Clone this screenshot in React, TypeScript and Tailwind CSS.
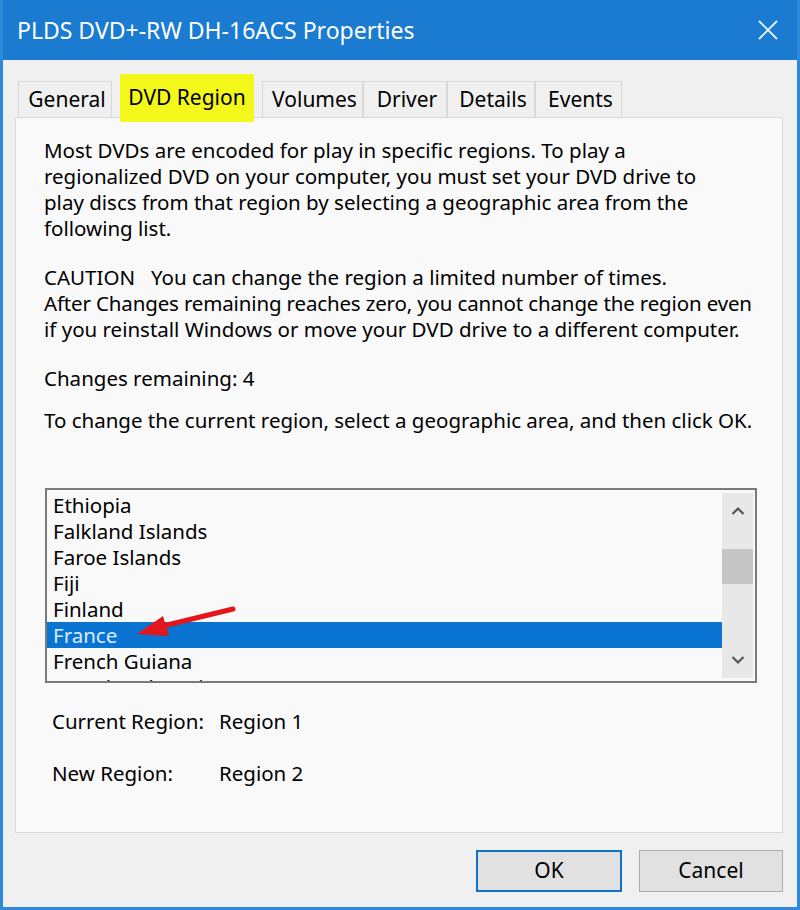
const TABS = [
  { label: 'General', w: 'w-[94px]' },
  { label: 'DVD Region', w: 'w-[150px]' },
  { label: 'Volumes', w: 'w-[101px]' },
  { label: 'Driver', w: 'w-[84px]' },
  { label: 'Details', w: 'w-[88px]' },
  { label: 'Events', w: 'w-[87px]' },
];

const COUNTRIES = [
  'Ethiopia',
  'Falkland Islands',
  'Faroe Islands',
  'Fiji',
  'Finland',
  'France',
  'French Guiana',
  'French Polynesia',
];

const font = "font-['Noto_Sans','Liberation_Sans',sans-serif]";

function Tab({ label, w }: { label: string; w: string }) {
  if (label === 'DVD Region') {
    return (
      <div className={`relative z-10 -mb-[5px] flex h-[48px] ${w} justify-center`}>
        <div className="flex w-[134px] items-center justify-center rounded-[2px] bg-[#f4f71a] text-[21px] text-black">
          {label}
        </div>
      </div>
    );
  }
  return (
    <div className={`flex h-[36px] ${w} items-center justify-center border border-b-0 border-[#d9d9d9] bg-[#f0f0f0] pl-[4px] text-[21px] text-black`}>
      {label}
    </div>
  );
}

function ScrollBar() {
  return (
    <div className="my-[3px] mr-[2px] flex w-[31px] flex-col bg-[#e8e8e8]">
      <div className="flex h-[36px] items-center justify-center">
        <svg width="14" height="10" viewBox="0 0 14 10">
          <path d="M1.5 8 L7 2.5 L12.5 8" fill="none" stroke="#555" strokeWidth="2.2" />
        </svg>
      </div>
      <div className="mt-[20px] h-[35px] bg-[#c6c6c6]" />
      <div className="flex-1" />
      <div className="flex h-[36px] items-center justify-center">
        <svg width="14" height="10" viewBox="0 0 14 10">
          <path d="M1.5 2 L7 7.5 L12.5 2" fill="none" stroke="#555" strokeWidth="2.2" />
        </svg>
      </div>
    </div>
  );
}

export default function App() {
  return (
    <div className={`relative flex h-[910px] w-[800px] flex-col border-x-[3px] border-b-[3px] border-[#2e8ad8] bg-[#f0f0f0] ${font}`}>
      {/* Title bar */}
      <div className="flex h-[60px] shrink-0 items-center justify-between bg-[#1a7bd0] pl-[14px] pr-[19px] text-white">
        <span className="text-[23px]">PLDS DVD+-RW DH-16ACS Properties</span>
        <svg width="20" height="20" viewBox="0 0 20 20">
          <path d="M1 1 L19 19 M19 1 L1 19" stroke="#e8f3ff" strokeWidth="1.8" />
        </svg>
      </div>

      {/* Tabs */}
      <div className="flex items-end pl-[15px] pt-[14px]">
        {TABS.map((t) => (
          <Tab key={t.label} label={t.label} w={t.w} />
        ))}
      </div>

      {/* Panel */}
      <div className="ml-[12px] mr-[14px] flex h-[716px] flex-col whitespace-nowrap border border-[#d9d9d9] bg-[#f9f9f9] pl-[28px] pr-[10px] pt-[19px] text-[20.5px] leading-[26px] text-black">
        <p>
          Most DVDs are encoded for play in specific regions. To play a
          <br />
          regionalized DVD on your computer, you must set your DVD drive to
          <br />
          play discs from that region by selecting a geographic area from the
          <br />
          following list.
        </p>
        <p className="mt-[23px]">
          CAUTION&nbsp;&nbsp; You can change the region a limited number of times.
          <br />
          <span className="tracking-[-0.15px]">After Changes remaining reaches zero, you cannot change the region even</span>
          <br />
          if you reinstall Windows or move your DVD drive to a different computer.
        </p>
        <p className="mt-[23px]">Changes remaining: 4</p>
        <p className="mt-[16px]">To change the current region, select a geographic area, and then click OK.</p>

        {/* List box */}
        <div className="relative ml-[1px] mt-[55px] flex h-[195px] w-[712px] border-2 border-[#7a7a7a] bg-[#f9f9f9]">
          <div className="flex-1 overflow-hidden pt-[2px]">
            {COUNTRIES.map((c) => (
              <div
                key={c}
                className={
                  c === 'France'
                    ? 'h-[26px] bg-[#0a74d2] pl-[6px] text-[#d8ecff]'
                    : 'h-[26px] pl-[6px]'
                }
              >
                {c}
              </div>
            ))}
          </div>
          <ScrollBar />

          {/* red arrow */}
          <svg className="absolute left-[88px] top-[114px]" width="110" height="40" viewBox="0 0 110 40">
            <path d="M98 5 L28 22" stroke="#e3161c" strokeWidth="5" strokeLinecap="round" />
            <polygon points="2,30 28,12 34,32" fill="#e3161c" />
          </svg>
        </div>

        <div className="ml-[8px] mt-[25px] flex">
          <span className="w-[167px]">Current Region:</span>
          <span>Region 1</span>
        </div>
        <div className="ml-[8px] mt-[26px] flex">
          <span className="w-[167px]">New Region:</span>
          <span>Region 2</span>
        </div>
      </div>

      {/* Buttons */}
      <div className="flex justify-end gap-[17px] pr-[14px] pt-[17px]">
        <button className="h-[42px] w-[146px] border-2 border-[#0a72cc] bg-[#e1e1e1] text-[21px] text-black">
          OK
        </button>
        <button className="h-[42px] w-[144px] border border-[#adadad] bg-[#e1e1e1] text-[21px] text-black">
          Cancel
        </button>
      </div>
    </div>
  );
}
